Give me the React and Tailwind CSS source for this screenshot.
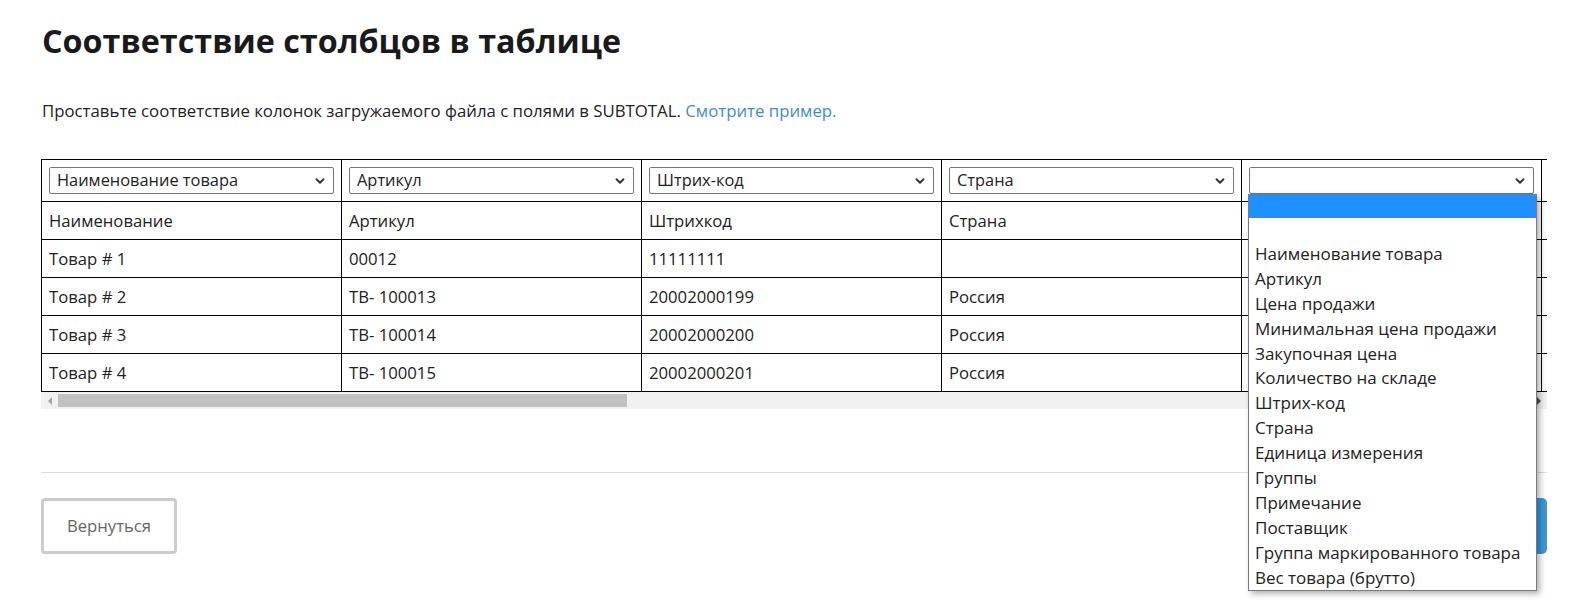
import { ChevronDown } from "lucide-react";

const columns = [
  { field: "Наименование товара", title: "Наименование", values: ["Товар # 1", "Товар # 2", "Товар # 3", "Товар # 4"] },
  { field: "Артикул", title: "Артикул", values: ["00012", "ТВ- 100013", "ТВ- 100014", "ТВ- 100015"] },
  { field: "Штрих-код", title: "Штрихкод", values: ["11111111", "20002000199", "20002000200", "20002000201"] },
  { field: "Страна", title: "Страна", values: ["", "Россия", "Россия", "Россия"] },
  { field: "", title: "", values: ["", "", "", ""] },
  { field: "", title: "", values: ["", "", "", ""] },
];

const options = [
  "Наименование товара",
  "Артикул",
  "Цена продажи",
  "Минимальная цена продажи",
  "Закупочная цена",
  "Количество на складе",
  "Штрих-код",
  "Страна",
  "Единица измерения",
  "Группы",
  "Примечание",
  "Поставщик",
  "Группа маркированного товара",
  "Вес товара (брутто)",
];

function FakeSelect({ value }) {
  return (
    <div className="h-[27px] w-full border border-[#767676] rounded-[2px] bg-white flex items-center justify-between pl-[7px] pr-[6px] text-[16.4px] text-[#222]">
      <span className="truncate">{value}</span>
      <ChevronDown className="w-[14px] h-[14px] text-[#333] shrink-0" strokeWidth={3.2} />
    </div>
  );
}

export default function App() {
  const rows = [0, 1, 2, 3];
  return (
    <div className="w-full h-screen overflow-hidden bg-white text-[#222]" style={{ fontFamily: '"Open Sans", "Noto Sans", sans-serif' }}>
      <div className="ml-[41px] w-[1506px] pt-[18px]">
        <h1 className="text-[32.3px] leading-[44px] font-bold text-[#1a1a1a] pl-px">Соответствие столбцов в таблице</h1>
        <p className="mt-[37px] text-[16.8px] leading-[24px] text-[#222] pl-px">
          Проставьте соответствие колонок загружаемого файла с полями в SUBTOTAL.{" "}
          <a className="text-[#3f8ccb]">Смотрите пример.</a>
        </p>

        {/* Table with horizontal scroll */}
        <div className="relative mt-[36px]">
          <div className="overflow-hidden w-full">
            <table className="border-collapse table-fixed w-[1801px]">
              <colgroup>
                {columns.map((c, i) => (
                  <col key={i} className="w-[300px]" />
                ))}
              </colgroup>
              <tbody>
                <tr className="h-[42px]">
                  {columns.map((c, i) => (
                    <td key={i} className="border border-black px-[7px] align-middle">
                      <FakeSelect value={c.field} />
                    </td>
                  ))}
                </tr>
                <tr className="h-[38px]">
                  {columns.map((c, i) => (
                    <td key={i} className="border border-black px-[7px] text-[16.7px] whitespace-nowrap">{c.title}</td>
                  ))}
                </tr>
                {rows.map((r) => (
                  <tr key={r} className="h-[38px]">
                    {columns.map((c, i) => (
                      <td key={i} className="border border-black px-[7px] text-[16.7px] whitespace-nowrap">{c.values[r]}</td>
                    ))}
                  </tr>
                ))}
              </tbody>
            </table>
          </div>
          {/* scrollbar */}
          <div className="h-[17px] bg-[#f1f1f1] flex items-center">
            <div className="w-[17px] h-full flex items-center justify-center">
              <div className="w-0 h-0 border-y-[4px] border-y-transparent border-r-[4px] border-r-[#a3a3a3]" />
            </div>
            <div className="h-[13px] w-[569px] bg-[#c1c1c1]" />
            <div className="flex-1" />
            <div className="w-[17px] h-full flex items-center justify-center">
              <div className="w-0 h-0 border-y-[4px] border-y-transparent border-l-[4px] border-l-[#505050]" />
            </div>
          </div>

          {/* open native dropdown */}
          <div className="absolute left-[1207px] top-[35px] w-[289px] bg-white border border-[#7a7a7a] shadow-[3px_3px_6px_rgba(0,0,0,0.3)] z-10">
            <div className="h-[23px] bg-[#1e90ff]" />
            <div className="h-[24px]" />
            {options.map((o) => (
              <div key={o} className="h-[24.9px] leading-[24.9px] pl-[6px] text-[17px] text-[#222] whitespace-nowrap">{o}</div>
            ))}
          </div>
        </div>

        <div className="mt-[63px] border-t border-[#dcdcdc]" />

        <div className="mt-[25px] flex items-center justify-between">
          <button className="h-[56px] w-[136px] border-[3px] border-[#cccccc] rounded-[4px] text-[16.7px] text-[#666] bg-white">
            Вернуться
          </button>
          <button className="h-[56px] w-[160px] rounded-[5px] bg-[#3a97d9] text-white text-[16px]">
            Загрузить
          </button>
        </div>
      </div>
    </div>
  );
}
